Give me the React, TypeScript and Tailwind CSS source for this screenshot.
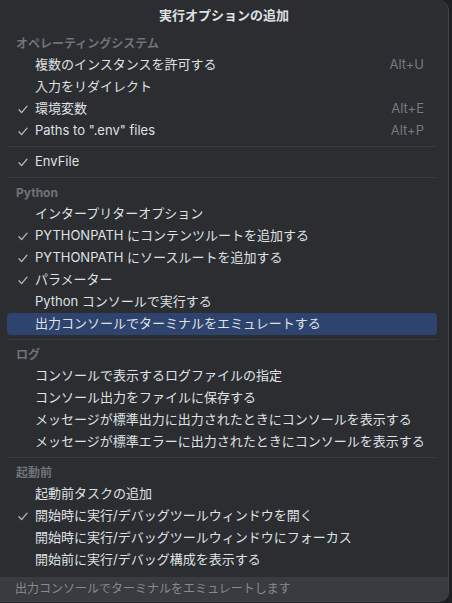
import React from "react";

type Item = { label: string; checked?: boolean; shortcut?: string; selected?: boolean };
type Section = { title?: string; items: Item[] };

const sections: Section[] = [
  {
    title: "オペレーティングシステム",
    items: [
      { label: "複数のインスタンスを許可する", shortcut: "Alt+U" },
      { label: "入力をリダイレクト" },
      { label: "環境変数", checked: true, shortcut: "Alt+E" },
      { label: 'Paths to ".env" files', checked: true, shortcut: "Alt+P" },
    ],
  },
  { items: [{ label: "EnvFile", checked: true }] },
  {
    title: "Python",
    items: [
      { label: "インタープリターオプション" },
      { label: "PYTHONPATH にコンテンツルートを追加する", checked: true },
      { label: "PYTHONPATH にソースルートを追加する", checked: true },
      { label: "パラメーター", checked: true },
      { label: "Python コンソールで実行する" },
      { label: "出力コンソールでターミナルをエミュレートする", selected: true },
    ],
  },
  {
    title: "ログ",
    items: [
      { label: "コンソールで表示するログファイルの指定" },
      { label: "コンソール出力をファイルに保存する" },
      { label: "メッセージが標準出力に出力されたときにコンソールを表示する" },
      { label: "メッセージが標準エラーに出力されたときにコンソールを表示する" },
    ],
  },
  {
    title: "起動前",
    items: [
      { label: "起動前タスクの追加" },
      { label: "開始時に実行/デバッグツールウィンドウを開く", checked: true },
      { label: "開始時に実行/デバッグツールウィンドウにフォーカス" },
      { label: "開始前に実行/デバッグ構成を表示する" },
    ],
  },
];

function Check() {
  return (
    <svg width="10" height="9" viewBox="0 0 10 9" fill="none" className="shrink-0">
      <path d="M1 4.8 L3.6 7.6 L9 1.2" stroke="#b4b8bf" strokeWidth="1.3" strokeLinecap="round" strokeLinejoin="round" />
    </svg>
  );
}

function Row({ item }: { item: Item }) {
  return (
    <div
      className={
        "flex h-[22px] items-center rounded-[4px] pl-[11px] pr-[13px] text-[13px] text-[#dfe1e5] " +
        (item.selected ? "bg-[#2e436e]" : "")
      }
    >
      <span className="flex w-[17px] shrink-0 items-center">{item.checked ? <Check /> : null}</span>
      <span className="flex-1 whitespace-nowrap">{item.label}</span>
      {item.shortcut ? <span className="text-[13px] text-[#767a81]">{item.shortcut}</span> : null}
    </div>
  );
}

export default function App() {
  return (
    <div
      className="h-[603px] w-[452px] bg-[#1e1f22]"
      style={{ fontFamily: 'Inter, "Noto Sans CJK JP", sans-serif' }}
    >
      <div className="flex h-[602px] w-[449px] flex-col overflow-hidden rounded-r-[10px] border-b border-r border-[#43454a] bg-[#2b2d30]">
        <div className="flex h-[33px] shrink-0 items-center justify-center pb-[2px] text-[13px] font-bold text-[#dfe1e5]">
          実行オプションの追加
        </div>
        <div className="pl-[7px] pr-[11px]">
          {sections.map((s, i) => (
            <div key={i}>
              {i > 0 ? (
                <div className="py-[4px]">
                  <div className="h-px bg-[#393b40]" />
                </div>
              ) : null}
              {s.title ? (
                <div className="flex h-[21px] items-center pl-[9px] text-[12px] font-bold text-[#6f737a]">{s.title}</div>
              ) : null}
              {s.items.map((it) => (
                <Row key={it.label} item={it} />
              ))}
            </div>
          ))}
        </div>
        <div className="flex-1" />
        <div className="flex h-[24px] shrink-0 items-center bg-[#393b40] pl-[15px] text-[12px] text-[#868a91]">
          出力コンソールでターミナルをエミュレートします
        </div>
      </div>
    </div>
  );
}
